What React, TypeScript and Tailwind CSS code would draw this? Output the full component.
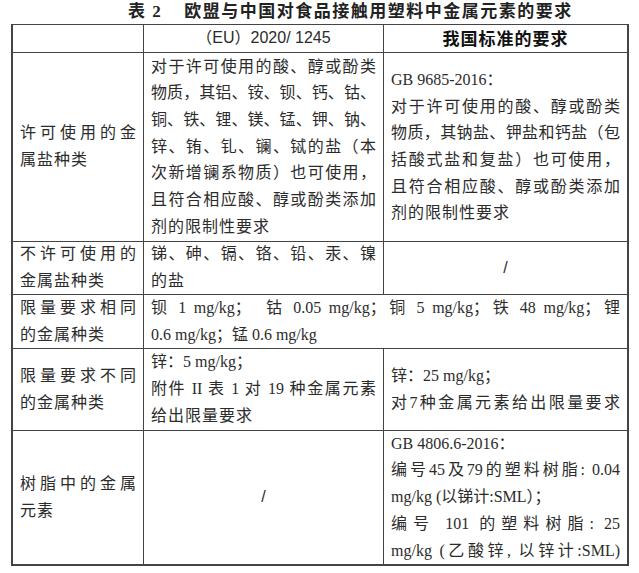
import React from "react";

function L({ children, j, n }: { children: React.ReactNode; j?: boolean; n?: boolean }) {
  return (
    <div
      className={
        j
          ? "whitespace-nowrap text-justify [text-align-last:justify]"
          : n
          ? "whitespace-nowrap"
          : "whitespace-nowrap tracking-[1px]"
      }
    >
      {children}
    </div>
  );
}

function Cell({ children, className = "" }: { children: React.ReactNode; className?: string }) {
  return <div className={`bg-white flex flex-col justify-center px-[7px] ${className}`}>{children}</div>;
}

export default function App() {
  return (
    <div className="w-[639px] h-[573px] bg-white text-[#2b2b2b] font-['Liberation_Serif','Noto_Sans_CJK_SC',serif] text-[16px] leading-[26.7px]">
      {/* title */}
      <div className="h-[24px] flex items-center pl-[128px] text-[17px] font-bold text-[#222] tracking-[1.5px]">
        <span>表 2</span>
        <span className="ml-[22px]">欧盟与中国对食品接触用塑料中金属元素的要求</span>
      </div>

      {/* table */}
      <div className="ml-[11px] w-[618px] border-t border-l-2 border-r-2 border-b-2 border-[#444] bg-[#444] grid grid-cols-[130px_239px_243px] grid-rows-[27px_188px_52px_53px_81px_133px] gap-px">
        {/* header */}
        <Cell>{""}</Cell>
        <Cell className="items-center font-['Liberation_Sans','Noto_Sans_CJK_SC',sans-serif] text-[16px]">
          <span>（EU）2020/ 1245</span>
        </Cell>
        <Cell className="items-center font-['Noto_Sans_CJK_SC',sans-serif] font-bold text-[17px] text-[#111] tracking-[1px]">
          <span>我国标准的要求</span>
        </Cell>

        {/* row 1 */}
        <Cell>
          <L j>许可使用的金</L>
          <L>属盐种类</L>
        </Cell>
        <Cell>
          <L j>对于许可使用的酸、醇或酚类</L>
          <L j>物质，其铝、铵、钡、钙、钴、</L>
          <L j>铜、铁、锂、镁、锰、钾、钠、</L>
          <L j>锌、铕、钆、镧、铽的盐（本</L>
          <L j>次新增镧系物质）也可使用，</L>
          <L j>且符合相应酸、醇或酚类添加</L>
          <L>剂的限制性要求</L>
        </Cell>
        <Cell>
          <L n>GB 9685-2016：</L>
          <L j>对于许可使用的酸、醇或酚类</L>
          <L j>物质，其钠盐、钾盐和钙盐（包</L>
          <L j>括酸式盐和复盐）也可使用，</L>
          <L j>且符合相应酸、醇或酚类添加</L>
          <L>剂的限制性要求</L>
        </Cell>

        {/* row 2 */}
        <Cell>
          <L j>不许可使用的</L>
          <L>金属盐种类</L>
        </Cell>
        <Cell>
          <L j>锑、砷、镉、铬、铅、汞、镍</L>
          <L>的盐</L>
        </Cell>
        <Cell className="items-center font-['Liberation_Sans',sans-serif]">
          <span>/</span>
        </Cell>

        {/* row 3 */}
        <Cell>
          <L j>限量要求相同</L>
          <L>的金属种类</L>
        </Cell>
        <Cell className="col-span-2">
          <L j>钡 1 mg/kg；　钴 0.05 mg/kg；铜 5 mg/kg；铁 48 mg/kg；锂</L>
          <L n>0.6 mg/kg；锰 0.6 mg/kg</L>
        </Cell>

        {/* row 4 */}
        <Cell>
          <L j>限量要求不同</L>
          <L>的金属种类</L>
        </Cell>
        <Cell>
          <L n>锌：5 mg/kg；</L>
          <L j>附件 II 表 1 对 19 种金属元素</L>
          <L>给出限量要求</L>
        </Cell>
        <Cell>
          <L n>锌：25 mg/kg；</L>
          <L j>对7种金属元素给出限量要求</L>
        </Cell>

        {/* row 5 */}
        <Cell>
          <L j>树脂中的金属</L>
          <L>元素</L>
        </Cell>
        <Cell className="items-center font-['Liberation_Sans',sans-serif]">
          <span>/</span>
        </Cell>
        <Cell>
          <L n>GB 4806.6-2016：</L>
          <L j>编号45及79的塑料树脂: 0.04</L>
          <L n>mg/kg (以锑计:SML）；</L>
          <L j>编号 101 的塑料树脂: 25</L>
          <L j>mg/kg (乙酸锌, 以锌计:SML)</L>
        </Cell>
      </div>
    </div>
  );
}
